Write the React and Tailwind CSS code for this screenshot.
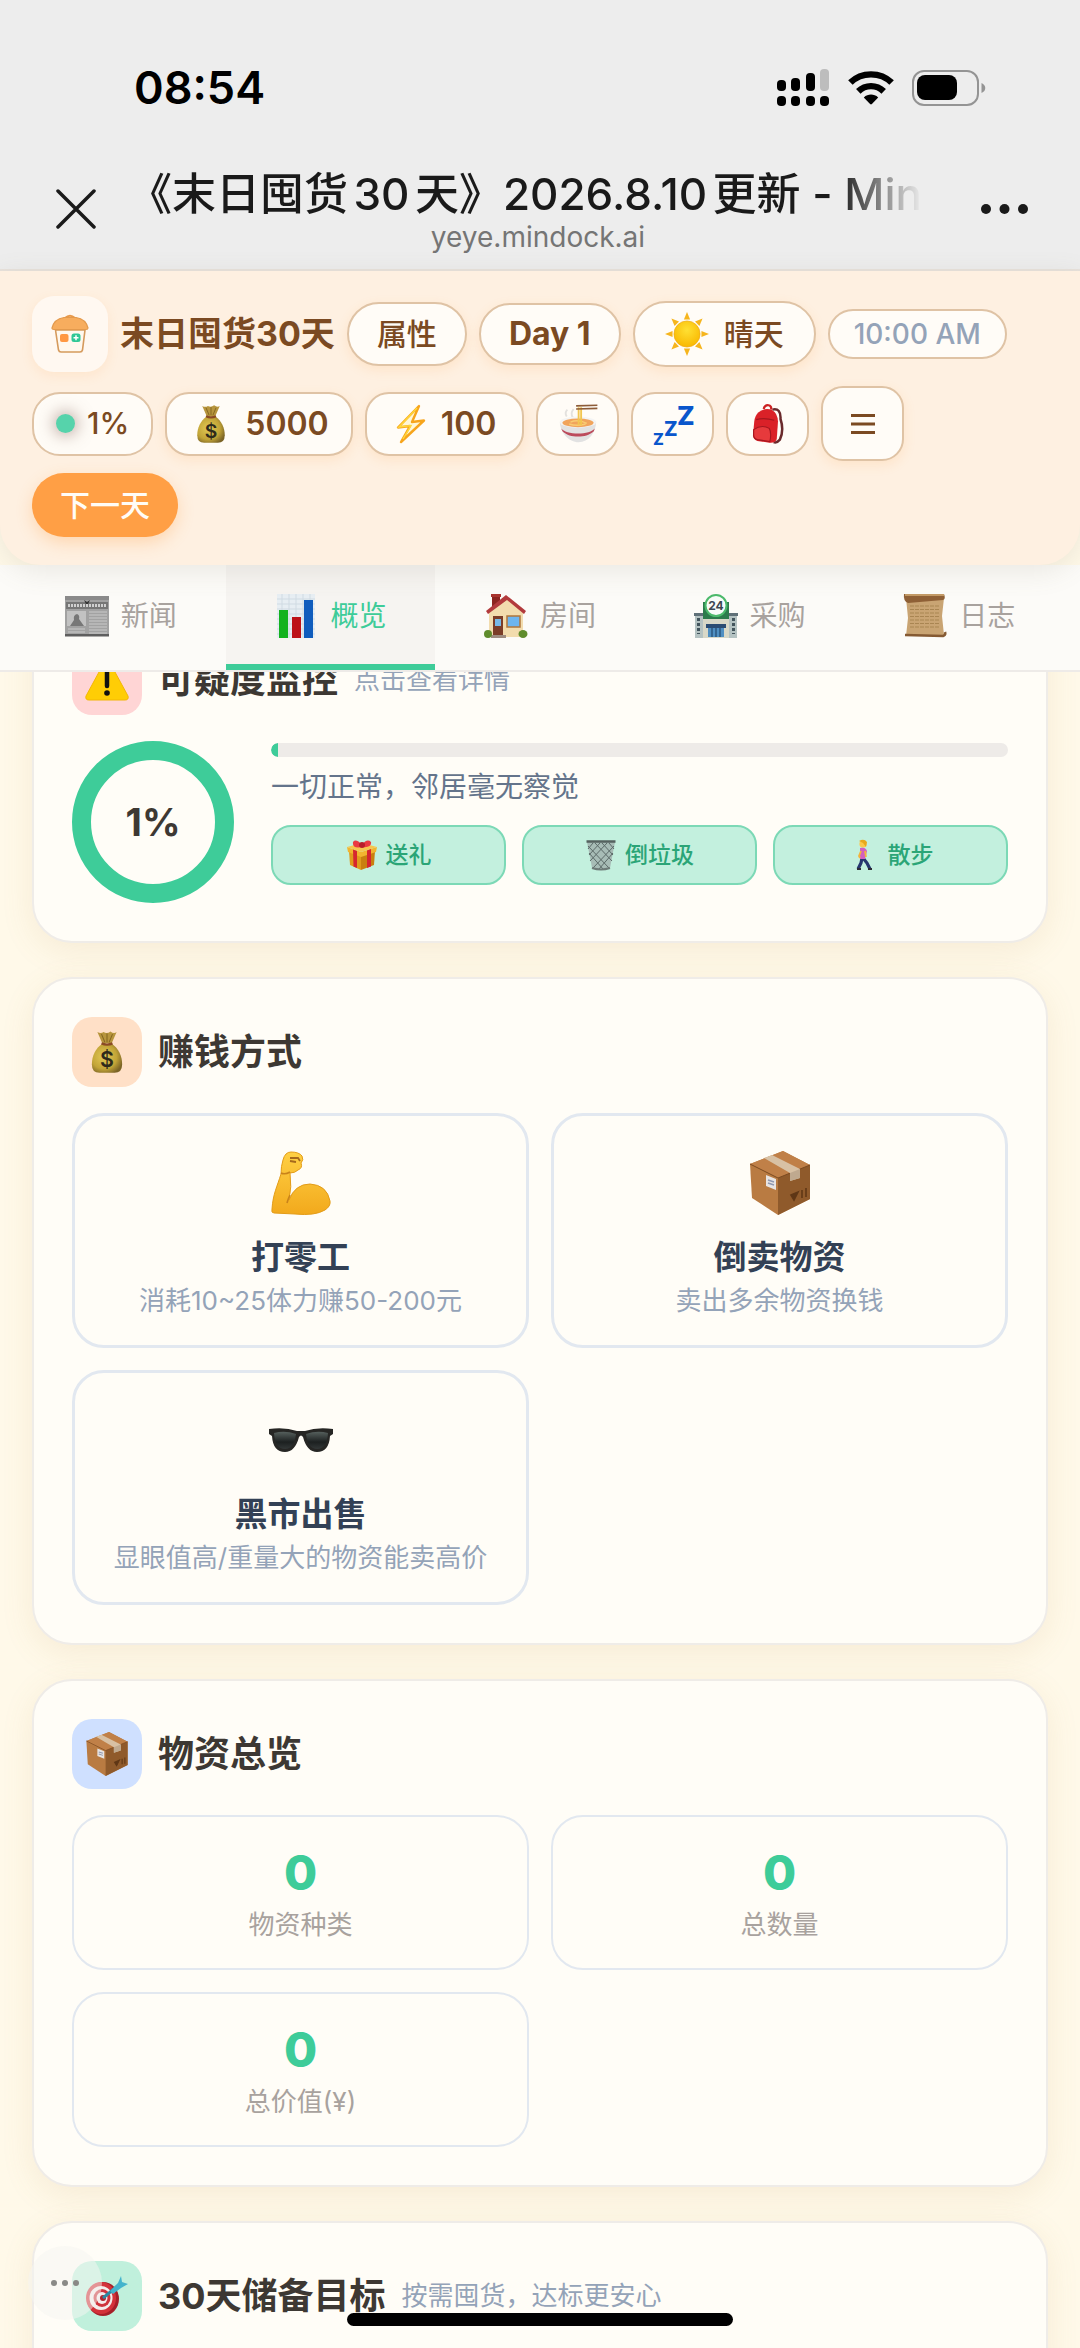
// src/App.jsx
import React from 'react';

/* ---------- system icons ---------- */

function SignalIcon() {
  return (
    <svg className="h-[38px] w-[54px]" viewBox="0 0 54 38" fill="#000" aria-hidden="true">
      <rect x="1" y="11" width="9" height="11" rx="4" />
      <rect x="15" y="9" width="9" height="13" rx="4" />
      <rect x="30" y="4" width="9" height="18" rx="4" />
      <rect x="44" y="0" width="9" height="22" rx="4" fill="#bdbdbd" />
      <rect x="1" y="27" width="9" height="10" rx="4" />
      <rect x="15" y="27" width="9" height="10" rx="4" />
      <rect x="30" y="27" width="9" height="10" rx="4" />
      <rect x="44" y="27" width="9" height="10" rx="4" />
    </svg>
  );
}

function WifiIcon() {
  return (
    <svg className="h-[34px] w-[46px]" viewBox="0 0 46 34" aria-hidden="true">
      <g fill="none" stroke="#000" strokeWidth="6.4">
        <path d="M2.4 11.6C13.5.6 32.500.6 43.600 11.600" />
        <path d="M10.300 20.400C17.400 13.400 28.600 13.400 35.700 20.400" />
      </g>
      <path d="M15.800 26.400C20 22.600 26 22.600 30.200 26.400L23.900 33.100Q23 34 22.100 33.100Z" fill="#000" />
    </svg>
  );
}

function BatteryIcon() {
  return (
    <svg className="h-[36px] w-[74px]" viewBox="0 0 74 36" aria-hidden="true">
      <rect x="1" y="1" width="65" height="34" rx="11" fill="none" stroke="#949494" strokeWidth="2" />
      <rect x="5" y="5" width="40" height="25" rx="8" fill="#000" />
      <path d="M69.500 13C74.500 15 74.500 21 69.500 23Z" fill="#949494" />
    </svg>
  );
}

function CloseIcon() {
  return (
    <svg className="h-10 w-10" viewBox="0 0 40 40" fill="none" stroke="#1a1a1a" strokeWidth="3.500" strokeLinecap="round" aria-hidden="true">
      <path d="M2 2L38 38M38 2L2 38" />
    </svg>
  );
}

function MoreIcon() {
  return (
    <svg className="h-[12px] w-[49px]" viewBox="0 0 49 12" fill="#1a1a1a" aria-hidden="true">
      <circle cx="6" cy="6" r="5" />
      <circle cx="24.500" cy="6" r="5" />
      <circle cx="43" cy="6" r="5" />
    </svg>
  );
}

/* ---------- illustrated icons ---------- */

function ShopLogo() {
  return (
    <svg className="h-10 w-10" viewBox="0 0 40 40" fill="none" aria-hidden="true">
      <path d="M5.500 16L8.500 36Q9 38 11 38H30Q32 38 32.500 36L35 16Z" fill="#fff8ee" stroke="#d59a5c" strokeWidth="1.600" />
      <path d="M15 4Q20 -.5 25 4" stroke="#e8994a" strokeWidth="2" />
      <path d="M2 14Q4 5 14 3.500H26Q36 5 38 14Q38 15.500 36 15.500H4Q2 15.500 2 14Z" fill="#f7ad5e" stroke="#e39a4d" strokeWidth="1.200" />
      <rect x="10" y="20" width="8.500" height="8" rx="2" fill="#ff9843" />
      <rect x="21.500" y="19.500" width="9" height="8.500" rx="2.500" fill="#2fc795" />
      <path d="M26 21.300V26.300M23.500 23.800H28.500" stroke="#fff" strokeWidth="1.500" />
    </svg>
  );
}

function SunIcon() {
  return (
    <svg className="h-11 w-11" viewBox="0 0 64 64" aria-hidden="true">
      <defs>
        <radialGradient id="sunFill" cx=".5" cy=".35" r=".65">
          <stop offset="0" stopColor="#ffe033" />
          <stop offset="1" stopColor="#f9b800" />
        </radialGradient>
      </defs>
      <g fill="#f6b51d">
        {[0, 45, 90, 135, 180, 225, 270, 315].map((a) => (
          <path key={a} d="M32 0L36.500 11H27.500Z" transform={`rotate(${a} 32 32)`} />
        ))}
      </g>
      <circle cx="32" cy="32" r="19" fill="url(#sunFill)" stroke="#efa914" />
    </svg>
  );
}

function MoneyBagIcon({ className }) {
  return (
    <svg className={className} viewBox="0 0 64 64" aria-hidden="true">
      <defs>
        <radialGradient id="bagFill" cx=".4" cy=".45" r=".65">
          <stop offset="0" stopColor="#e3ca55" />
          <stop offset=".65" stopColor="#c2a437" />
          <stop offset="1" stopColor="#7b6426" />
        </radialGradient>
      </defs>
      <path d="M18 3Q23 6 27 3Q32 6 37 2Q42 6 46 3L39 19H25Z" fill="#b7953d" />
      <path d="M24 6L29 18M32 5V18M40 6L35 18" stroke="#836520" strokeWidth="1.500" />
      <path d="M25 20H39C49 27 54 38 54 50Q54 62 43 62H21Q10 62 10 50C10 38 15 27 25 20Z" fill="url(#bagFill)" />
      <path d="M24 19.500Q32 23 40 19.500" fill="none" stroke="#8a4b25" strokeWidth="3.500" />
      <text x="32" y="54" textAnchor="middle" fontFamily="Inter, sans-serif" fontSize="31" fontWeight="600" fill="#2e2a1b">$</text>
    </svg>
  );
}

function BoltIcon() {
  return (
    <svg className="h-10 w-9" viewBox="0 0 36 40" aria-hidden="true">
      <path d="M26 2L5 23.500L17 22L8 38L31 16.500L19 18Z" fill="#fff7d6" stroke="#f7a51c" strokeWidth="2.400" strokeLinejoin="round" />
      <path d="M24 4L6 23L18 21.500L10 35" fill="none" stroke="#ffd83a" strokeWidth="1.400" />
    </svg>
  );
}

function NoodleIcon() {
  return (
    <svg className="h-10 w-10" viewBox="0 0 64 64" aria-hidden="true">
      <path d="M14 20Q10 14 15 9M24 22Q19 15 25 8" fill="none" stroke="#e3e1de" strokeWidth="3" />
      <path d="M3 29C4 46 17 61 33 61C49 61 60 46 61 29Z" fill="#e2e2e2" />
      <path d="M5 39C9 44 20 47 32 47S55 44 59 39L57 44C50 50 42 52 32 52S14 50 7.500 44Z" fill="#bc4b5c" />
      <ellipse cx="32" cy="29" rx="29" ry="9" fill="#f4f4f4" />
      <ellipse cx="32" cy="30" rx="25" ry="7" fill="#f1a45c" />
      <path d="M20 29Q32 24 46 31M18 32Q30 36 44 32" fill="none" stroke="#f9cc73" strokeWidth="2.500" />
      <path d="M33 5V34M37 5V34" stroke="#f2c650" strokeWidth="3" />
      <path d="M29 3L63 2M29 8L63 7" stroke="#8d5c38" strokeWidth="2.600" />
    </svg>
  );
}

function SleepIcon() {
  return (
    <svg className="h-11 w-11 overflow-visible" viewBox="0 0 44 44" fontFamily="Inter, sans-serif" fontWeight="800" fill="#0a56cc" aria-hidden="true">
      <text x="2" y="43" fontSize="16">Z</text>
      <text x="13" y="34" fontSize="20">Z</text>
      <text x="26" y="23" fontSize="26">Z</text>
    </svg>
  );
}

function BackpackIcon() {
  return (
    <svg className="h-10 w-10" viewBox="0 0 64 64" aria-hidden="true">
      <path d="M39 9Q53 6 52 24Q58 42 51 57Q46 63 41 61" fill="none" stroke="#6a2a2c" strokeWidth="4" />
      <path d="M25 8Q27 1 33 2Q38 3 37 9" fill="none" stroke="#c22" strokeWidth="3.500" />
      <path d="M17 13Q28 5 39 10Q47 14 48 28L46 56Q44 63 34 62L15 59Q8 57 8 50L10 28Q11 18 17 13Z" fill="#da2128" />
      <path d="M13 25Q26 21 42 26" fill="none" stroke="#a5161e" strokeWidth="2" />
      <path d="M9 41Q22 32 34 39Q38 46 35 60L15 57Q9 55 9 49Z" fill="#e73a3c" stroke="#a5161e" strokeWidth="1.800" />
    </svg>
  );
}

function MenuIcon() {
  return (
    <svg className="h-6 w-6" viewBox="0 0 24 24" stroke="#7b4a22" strokeWidth="3" aria-hidden="true">
      <path d="M0 3.500H24M0 12H24M0 20.500H24" />
    </svg>
  );
}

function NewspaperIcon() {
  return (
    <svg className="h-11 w-11" viewBox="0 0 44 44" aria-hidden="true">
      <rect x="0" y="2" width="44" height="40" fill="#a2a2a2" />
      <rect x="0" y="2" width="44" height="4" fill="#8a8a8a" />
      <rect x="1" y="8" width="42" height="7" fill="#767676" />
      <path d="M3 11.500H41" stroke="#cfcfcf" strokeWidth="3" strokeDasharray="2 1" />
      <path d="M19 6L22 8L25 6L23 10H21Z" fill="#333" />
      <rect x="2" y="17" width="19" height="15" fill="#c2c2c2" />
      <path d="M5 32L9 26Q8 21 12 20Q15 21 14 25L19 32Z" fill="#777" />
      <path d="M24 18H42M24 21H42M24 24H42M24 27H42M24 30H42M24 33H42M3 35H20M3 38H20M24 36H42M24 39H42" stroke="#c9c9c9" strokeWidth="1.200" />
      <rect x="0" y="40" width="44" height="2.500" fill="#5e5e5e" />
    </svg>
  );
}

function ChartIcon() {
  return (
    <svg className="h-11 w-11" viewBox="0 0 44 44" aria-hidden="true">
      <rect x="3" y="0" width="38" height="44" fill="#e7eef3" />
      <path d="M3 5H41M3 10H41M3 15H41M3 20H41M3 25H41M3 30H41M3 35H41M3 40H41M8 0V44M15 0V44M22 0V44M29 0V44M36 0V44" stroke="#d0dbe3" strokeWidth="1" />
      <rect x="5" y="16" width="9" height="28" fill="#14b21f" />
      <rect x="18" y="23" width="9" height="21" fill="#bd1218" />
      <rect x="30" y="6" width="9" height="38" fill="#0f5cbd" />
    </svg>
  );
}

function HouseIcon() {
  return (
    <svg className="h-11 w-11" viewBox="0 0 44 44" aria-hidden="true">
      <rect x="8" y="1" width="8" height="14" fill="#8c2420" />
      <rect x="7" y="0" width="10" height="3" fill="#a9352f" />
      <path d="M5 18L22 3L39 18V43H5Z" fill="#f2dcae" />
      <path d="M22 1L42 17L40 20L23 6L4 20L2 17Z" fill="#b23a3c" />
      <rect x="9" y="22" width="10" height="20" fill="#7b3d28" />
      <rect x="11" y="25" width="6" height="7" fill="#78b9e8" />
      <rect x="23" y="22" width="13" height="11" fill="#6db5ee" stroke="#b0763a" strokeWidth="1.500" />
      <rect x="7" y="41" width="15" height="3" fill="#9e8c80" />
      <ellipse cx="4" cy="40" rx="4" ry="4" fill="#5f8c2c" />
      <ellipse cx="39" cy="40" rx="4.500" ry="4" fill="#5f8c2c" />
    </svg>
  );
}

function StoreIcon() {
  return (
    <svg className="h-11 w-11" viewBox="0 0 44 44" aria-hidden="true">
      <rect x="1" y="20" width="42" height="24" fill="#b4c2c2" />
      <rect x="0" y="19" width="44" height="3" fill="#5f7078" />
      <path d="M9 8H35V25H9Z" fill="#2c7c4c" />
      <rect x="9" y="25" width="26" height="19" fill="#d8d8c8" />
      <rect x="12" y="30" width="20" height="4" fill="#2b4c73" />
      <path d="M14 34H30V43H14Z" fill="#4f8fc2" />
      <path d="M18 34V43M22 34V43M26 34V43" stroke="#244a6e" strokeWidth="1.200" />
      <path d="M4.500 24V40M39.500 24V40" stroke="#42545c" strokeWidth="3" strokeDasharray="3 2" />
      <circle cx="22" cy="11.500" r="10.500" fill="#f8fcf9" stroke="#4cba6c" strokeWidth="2" />
      <text x="22" y="16" textAnchor="middle" fontFamily="Inter, sans-serif" fontSize="12" fontWeight="700" fill="#3b4752">24</text>
    </svg>
  );
}

function ScrollIcon() {
  return (
    <svg className="h-11 w-11" viewBox="0 0 44 44" aria-hidden="true">
      <path d="M3 4H41L39 22L41 41L3 42L5 24Z" fill="#c9a473" />
      <path d="M7 12H37M7 15.500H37M7 19H36M7 22.500H36M7 26H36M7 29.500H37M7 33H37" stroke="#a98552" strokeWidth="1.100" strokeDasharray="4 1" />
      <path d="M1 0H41Q43 5 40 6L5 9Q0 7 1 0Z" fill="#8f6036" />
      <path d="M2 1H41" stroke="#c39a66" strokeWidth="2" />
      <path d="M2 41L40 42Q43 41 42 38" fill="none" stroke="#855a33" strokeWidth="2.500" />
    </svg>
  );
}

function WarningIcon() {
  return (
    <svg className="h-11 w-11" viewBox="0 0 44 44" aria-hidden="true">
      <path d="M20 3Q22 0 24 3L43 38Q44 42 40 42H4Q0 42 1 38Z" fill="#ffcd05" stroke="#f2b705" strokeWidth="1" />
      <path d="M22 14V28" stroke="#111" strokeWidth="4.500" strokeLinecap="round" />
      <circle cx="22" cy="35" r="2.800" fill="#111" />
    </svg>
  );
}

function GiftIcon() {
  return (
    <svg className="h-8 w-8" viewBox="0 0 32 32" aria-hidden="true">
      <path d="M3 12L15 16V31L4 26Z" fill="#e09b1d" />
      <path d="M29 12L15 16V31L28 26Z" fill="#c9800f" />
      <path d="M1 8L15 13L31 8L30 13L15 18L2 13Z" fill="#f2b52f" />
      <path d="M1 8L16 4L31 8L15 13Z" fill="#f6c64e" />
      <path d="M7 10.500L11 12V29L7.500 27.500ZM21 11.500L25 10V27.500L21 29Z" fill="#d6262f" />
      <path d="M16 8Q6 10 7 3Q10 -1 16 6Q21 -1 25 3Q26 9 16 8Z" fill="#ea3942" />
      <circle cx="16" cy="6" r="3" fill="#b81d2a" />
    </svg>
  );
}

function TrashIcon() {
  return (
    <svg className="h-8 w-8" viewBox="0 0 32 32" aria-hidden="true">
      <path d="M2 3L7 29Q16 33 25 29L30 3Z" fill="#a7bcb6" />
      <path d="M3 7L24 29M4 14L18 30M10 4L27 22M17 4L28 16M24 4L29 10M29 7L8 29M28 14L14 30M22 4L5 22M15 4L4 16M8 4L3 10" stroke="#5c6b69" strokeWidth="1" />
      <path d="M1.500 2.500H30.500" stroke="#55625f" strokeWidth="2.500" />
      <path d="M7 29Q16 32 25 29" fill="none" stroke="#6d7b78" strokeWidth="2" />
    </svg>
  );
}

function WalkIcon() {
  return (
    <svg className="h-8 w-8" viewBox="0 0 32 32" fill="none" aria-hidden="true">
      <path d="M15 19L19 24L22 30M14 19L13 24L10 30" stroke="#26366e" strokeWidth="3.200" />
      <path d="M20 30H24M9 30H13" stroke="#2c2c34" strokeWidth="2" />
      <path d="M12 9Q17 7 19 12L17 20H12Z" fill="#d25fc0" />
      <path d="M13 12L11 17L12 19M17 12L18 18" stroke="#f2b43c" strokeWidth="1.800" />
      <circle cx="15" cy="5" r="3.600" fill="#fbc84a" />
      <path d="M11 2Q16 -1 19 3L18 8L15 4Z" fill="#e8a81c" />
    </svg>
  );
}

function MuscleIcon() {
  return (
    <svg className="h-16 w-16" viewBox="0 0 64 64" aria-hidden="true">
      <defs>
        <linearGradient id="armFill" x1="0" y1="0" x2="0" y2="1">
          <stop offset="0" stopColor="#ffd044" />
          <stop offset="1" stopColor="#f2a91c" />
        </linearGradient>
      </defs>
      <path d="M14 9Q16 1 22 1Q30 1 33 5Q35 9 32 12Q34 17 29 19Q26 22 21 22Q23 36 20 49Q26 33 41 33Q58 34 61 50Q62 55 56 59Q46 65 26 63L5 62Q2 62 3 58C4 43 8 36 12 23Q12 15 14 9Z" fill="url(#armFill)" stroke="#e39c18" strokeWidth="1" />
      <path d="M21 7L29 7L31 10M21 10L27 11" fill="none" stroke="#a6691c" strokeWidth="1.800" />
      <path d="M12 22Q16 24 21 21M18 52Q19 48 21 44" fill="none" stroke="#c9831a" strokeWidth="1.600" />
    </svg>
  );
}

function PackageIcon({ className }) {
  return (
    <svg className={className} viewBox="0 0 64 64" aria-hidden="true">
      <path d="M35 0L62 14V48L30 64L4 47L2 13Z" fill="#b97b42" />
      <path d="M35 0L62 14L30 27L2 13Z" fill="#c08048" />
      <path d="M30 27L62 14V48L30 64Z" fill="#8f5a2b" />
      <path d="M2 13L30 27L62 14" fill="none" stroke="#7c4b22" strokeWidth="1" />
      <path d="M16 7L24 4L52 18V27L42 30V22Z" fill="#d8c1a4" />
      <path d="M42 22L52 18V27L42 30Z" fill="#bfa98f" />
      <path d="M18 24L28 28V39L18 35Z" fill="#e8e4e2" />
      <path d="M20 29L26 31M20 32L26 34" stroke="#8e98b0" strokeWidth="1.500" />
      <path d="M43 44L50 41L46 49ZM54 39V47M58 37V46" fill="#5f3716" stroke="#5f3716" strokeWidth="1.600" />
    </svg>
  );
}

function SunglassesIcon() {
  return (
    <svg className="h-16 w-16" viewBox="0 0 64 64" aria-hidden="true">
      <defs>
        <linearGradient id="lensFill" x1="0" y1="0" x2="0" y2="1">
          <stop offset="0" stopColor="#56605d" />
          <stop offset=".6" stopColor="#1c2020" />
          <stop offset="1" stopColor="#323737" />
        </linearGradient>
      </defs>
      <path d="M0 21Q16 19 28 23H36Q48 19 64 21V26L61 28Q60 44 48 44Q38 44 34 29Q32 26 30 29Q26 44 16 44Q4 44 3 28L0 26Z" fill="#262624" />
      <path d="M5 25Q16 22 27 26Q25 41 16 41Q6 41 5 25ZM59 25Q48 22 37 26Q39 41 48 41Q58 41 59 25Z" fill="url(#lensFill)" />
    </svg>
  );
}

function TargetIcon() {
  return (
    <svg className="h-11 w-11" viewBox="0 0 44 44" aria-hidden="true">
      <ellipse cx="18" cy="25" rx="16" ry="17" fill="#a61f29" />
      <ellipse cx="16" cy="24" rx="15" ry="16" fill="#d3323a" />
      <ellipse cx="16" cy="24" rx="11.500" ry="12" fill="#f4eceb" />
      <ellipse cx="17" cy="24" rx="8.500" ry="9" fill="#cf343c" />
      <ellipse cx="17" cy="24" rx="5.500" ry="6" fill="#f4eceb" />
      <circle cx="18" cy="24" r="3" fill="#b1252e" />
      <path d="M18 24L35 10" stroke="#2b8aa3" strokeWidth="3" />
      <path d="M25 17L33 9L36 2L37 8L43 10L36 14L28 20Z" fill="#44b4cd" />
    </svg>
  );
}

/* ---------- data ---------- */

const tabs = [
  { label: '新闻', Icon: NewspaperIcon },
  { label: '概览', Icon: ChartIcon, active: true },
  { label: '房间', Icon: HouseIcon },
  { label: '采购', Icon: StoreIcon },
  { label: '日志', Icon: ScrollIcon },
];

const suspicionActions = [
  { label: '送礼', Icon: GiftIcon },
  { label: '倒垃圾', Icon: TrashIcon },
  { label: '散步', Icon: WalkIcon },
];

const earnOptions = [
  { name: '打零工', desc: '消耗10~25体力赚50-200元', icon: <MuscleIcon /> },
  { name: '倒卖物资', desc: '卖出多余物资换钱', icon: <PackageIcon className="h-16 w-16" /> },
  { name: '黑市出售', desc: '显眼值高/重量大的物资能卖高价', icon: <SunglassesIcon /> },
];

const stats = [
  { value: 0, label: '物资种类' },
  { value: 0, label: '总数量' },
  { value: 0, label: '总价值(¥)' },
];

/* ---------- layout pieces ---------- */

function BrowserBar() {
  return (
    <div className="shrink-0 border-b-2 border-[#e8e2dc] bg-[#ededed]">
      <div className="flex items-center justify-between pt-[60px] pr-[94px] pl-[134px]">
        <span className="text-[45px] leading-[56px] font-semibold text-black">08:54</span>
        <div className="flex items-center gap-[18px]">
          <SignalIcon />
          <WifiIcon />
          <BatteryIcon />
        </div>
      </div>
      <div className="flex items-center gap-8 pt-[50px] pr-[51px] pb-[17px] pl-14">
        <button type="button" aria-label="关闭">
          <CloseIcon />
        </button>
        <div className="min-w-0 flex-1">
          <h1 className="overflow-hidden text-[44px] leading-[56px] font-medium whitespace-nowrap text-[#1a1a1a] [mask-image:linear-gradient(to_right,#000_calc(100%-110px),transparent_calc(100%-26px))] [text-autospace:normal]">
            《末日囤货30天》2026.8.10更新 - Mindock
          </h1>
          <p className="text-center text-[28px] leading-[30px] text-[#757575]">yeye.mindock.ai</p>
        </div>
        <button type="button" aria-label="更多">
          <MoreIcon />
        </button>
      </div>
    </div>
  );
}

const pill = 'flex items-center justify-center border-2 border-[#dfc3a5] bg-[#fffcf7] text-[#7b4a22]';
const pillShadow = 'shadow-[0_4px_12px_rgba(255,159,69,0.15)]';

function GameHeader() {
  return (
    <header className="relative z-10 flex shrink-0 flex-wrap items-center gap-3 rounded-b-[40px] bg-[#fef0e1] px-8 pt-[23px] pb-7 shadow-[0_6px_28px_rgba(120,113,90,0.14)]">
      <div className="flex items-center gap-3 py-0.5">
        <div className="flex size-[76px] items-center justify-center rounded-[22px] bg-[#fff8f1] shadow-[0_4px_12px_rgba(255,159,69,0.12)]">
          <ShopLogo />
        </div>
        <span className="text-[34px] leading-[44px] font-bold text-[#7b4a22]">末日囤货30天</span>
      </div>
      <button type="button" className={`${pill} ${pillShadow} h-16 rounded-full px-[28px] text-[30px] font-medium`}>
        属性
      </button>
      <div className={`${pill} ${pillShadow} h-[62px] rounded-full px-[28px] text-[32px] font-bold`}>Day 1</div>
      <div className={`${pill} ${pillShadow} h-[66px] gap-[15px] rounded-full px-[30px] text-[30px] font-medium`}>
        <SunIcon />
        晴天
      </div>
      <div className="flex h-[50px] items-center rounded-full border-2 border-[#dfc3a5] bg-[#fffcf7] px-6 text-[28px] font-medium text-[#94a3b8]">
        10:00 AM
      </div>

      <button type="button" className={`${pill} h-16 gap-3 rounded-[28px] px-[22px] text-[30px] font-medium`}>
        <span className="size-[19px] rounded-full bg-[#56d3ab] shadow-[0_0_16px_2px_rgba(120,85,75,0.5)]" />
        1%
      </button>
      <div className={`${pill} ${pillShadow} h-16 gap-3 rounded-3xl px-[22px] text-[32px] font-semibold`}>
        <MoneyBagIcon className="h-10 w-11" />
        5000
      </div>
      <div className={`${pill} ${pillShadow} h-16 gap-3 rounded-3xl px-[26px] text-[32px] font-semibold`}>
        <BoltIcon />
        100
      </div>
      <button type="button" aria-label="吃饭" className={`${pill} h-16 w-[83px] rounded-3xl`}>
        <NoodleIcon />
      </button>
      <button type="button" aria-label="睡觉" className={`${pill} h-16 w-[83px] rounded-3xl`}>
        <SleepIcon />
      </button>
      <button type="button" aria-label="背包" className={`${pill} h-16 w-[83px] rounded-3xl`}>
        <BackpackIcon />
      </button>
      <button type="button" aria-label="菜单" className={`${pill} ${pillShadow} h-[75px] w-[83px] rounded-[22px]`}>
        <MenuIcon />
      </button>

      <div className="basis-full">
        <button
          type="button"
          className="block h-16 rounded-full bg-[#ff9f45] px-7 text-[30px] font-medium text-[#fffcf7] shadow-[0_6px_16px_rgba(255,159,69,0.3)]"
        >
          下一天
        </button>
      </div>
    </header>
  );
}

function TabBar() {
  return (
    <nav className="-mt-10 flex shrink-0 border-b-2 border-[#eeebe8] bg-[#fcfbf8] bg-[linear-gradient(#fff9e9_40px,#fcfbf8_40px)] px-4 pt-10">
      {tabs.map(({ label, Icon, active }) => (
        <button
          key={label}
          type="button"
          className={`flex h-[105px] flex-1 items-center justify-center gap-3 border-b-[6px] pt-0.5 text-[28px] ${
            active ? 'border-[#3ecc99] bg-[#f6f4f1] text-[#3ecc99]' : 'border-transparent text-[#a8a29e]'
          }`}
        >
          <Icon />
          {label}
        </button>
      ))}
    </nav>
  );
}

function Card({ icon, iconBg, title, hint, children }) {
  return (
    <section className="rounded-[40px] border-2 border-[#efece8] bg-[#fffdf7] p-[38px] shadow-[0_8px_32px_rgba(180,140,70,0.12)]">
      <div className="mb-[26px] flex items-center gap-4">
        <span className={`flex size-[70px] items-center justify-center rounded-[20px] ${iconBg}`}>{icon}</span>
        <h2 className="text-[36px] leading-[48px] font-bold text-[#3d3833]">{title}</h2>
        {hint && <span className="text-[26px] leading-9 text-[#94a3b8]">{hint}</span>}
      </div>
      {children}
    </section>
  );
}

function SuspicionPanel({ percent }) {
  return (
    <div className="flex items-start gap-[37px]">
      <div className="flex size-[162px] shrink-0 items-center justify-center rounded-full border-[19px] border-[#3ecc99] text-[38px] font-bold text-[#3d3833]">
        {percent}%
      </div>
      <div className="min-w-0 flex-1 pt-0.5">
        <div className="h-3.5 overflow-hidden rounded-full bg-[#eeebe8]">
          <div className="h-full rounded-l-full bg-[#3ecc99]" style={{ width: `${percent}%` }} />
        </div>
        <p className="mt-[10px] text-[28px] leading-10 text-[#64748b]">一切正常，邻居毫无察觉</p>
        <div className="mt-[18px] grid grid-cols-3 gap-4">
          {suspicionActions.map(({ label, Icon }) => (
            <button
              key={label}
              type="button"
              className="flex h-[60px] items-center justify-center gap-2 rounded-[20px] border-2 border-[#7cd9b6] bg-[#c3f0de] text-[23px] font-medium text-[#2ba577]"
            >
              <Icon />
              {label}
            </button>
          ))}
        </div>
      </div>
    </div>
  );
}

export default function App() {
  return (
    <div className="flex h-screen flex-col overflow-hidden bg-[#fff9e9] font-['Inter','Noto_Sans_CJK_SC',sans-serif]">
      <BrowserBar />
      <GameHeader />
      <TabBar />

      <main className="min-h-0 flex-1 overflow-hidden px-8">
        {/* list is scrolled a little, the first card sits under the tabs */}
        <div className="-mt-[67px] flex flex-col gap-[34px]">
          <Card icon={<WarningIcon />} iconBg="bg-[#ffd5d5]" title="可疑度监控" hint="点击查看详情">
            <SuspicionPanel percent={1} />
          </Card>

          <Card icon={<MoneyBagIcon className="h-11 w-11" />} iconBg="bg-[#ffe0c7]" title="赚钱方式">
            <div className="grid grid-cols-2 gap-[22px]">
              {earnOptions.map((o) => (
                <button
                  key={o.name}
                  type="button"
                  className="flex flex-col items-center rounded-[32px] border-[3px] border-[#e2e8f0] py-[26px]"
                >
                  <span className="flex h-[81px] items-center">{o.icon}</span>
                  <span className="mt-3 text-[33px] leading-[44px] font-bold text-[#334155]">{o.name}</span>
                  <span className="mt-1 text-[26px] leading-9 text-[#94a3b8]">{o.desc}</span>
                </button>
              ))}
            </div>
          </Card>

          <Card icon={<PackageIcon className="h-11 w-11" />} iconBg="bg-[#cfe0ff]" title="物资总览">
            <div className="grid grid-cols-2 gap-[22px]">
              {stats.map((s) => (
                <div key={s.label} className="rounded-[32px] border-2 border-[#e2e8f0] py-[25px] text-center">
                  <div className="text-[48px] leading-[61px] font-extrabold text-[#3ecc99]">{s.value}</div>
                  <div className="mt-1 text-[26px] leading-9 text-[#a8a29e]">{s.label}</div>
                </div>
              ))}
            </div>
          </Card>

          <Card icon={<TargetIcon />} iconBg="bg-[#c0f0dc]" title="30天储备目标" hint="按需囤货，达标更安心" />
        </div>
      </main>

      {/* floating handle and home indicator */}
      <button
        type="button"
        aria-label="更多操作"
        className="fixed bottom-7 left-7 z-20 flex size-[74px] items-center justify-center gap-[5px] rounded-full bg-[#f5f5f2]/50"
      >
        <span className="size-1.5 rounded-full bg-[#8a8a87]" />
        <span className="size-1.5 rounded-full bg-[#8a8a87]" />
        <span className="size-1.5 rounded-full bg-[#8a8a87]" />
      </button>
      <div className="fixed bottom-[22px] left-1/2 z-30 h-[13px] w-[386px] -translate-x-1/2 rounded-full bg-black" />
    </div>
  );
}
